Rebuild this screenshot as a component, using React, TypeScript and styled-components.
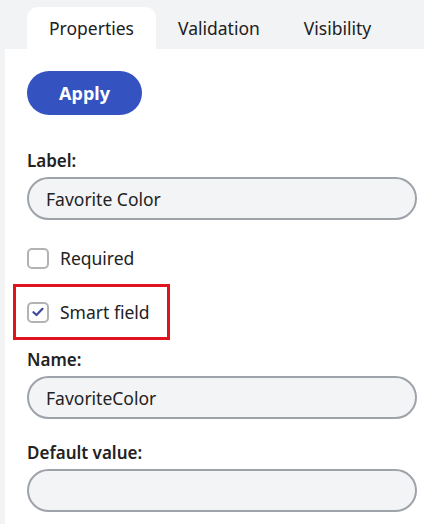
import React from 'react';
import styled, { createGlobalStyle } from 'styled-components';

const GlobalStyle = createGlobalStyle`
    html, body {
        margin: 0;
        background: #f2f3f5;
        font-family: "Noto Sans", "Open Sans", "Liberation Sans", sans-serif;
        color: #222;
    }
    * { box-sizing: border-box; }
`;

const Page = styled.div`
    min-height: 524px;
    display: flex;
    flex-direction: column;
`;

const TabBar = styled.div`
    display: flex;
    padding: 7px 0 0 27px;
`;

const Tab = styled.div<{ $active?: boolean }>`
    height: 42px;
    padding: 0 22px;
    display: flex;
    align-items: center;
    font-size: 17.5px;
    color: #202020;
    border-radius: 11px 11px 0 0;
    background: ${p => (p.$active ? '#fff' : 'transparent')};
`;

const Panel = styled.div`
    flex: 1;
    margin-left: 5px;
    background: #fff;
    padding: 22px 7px 0 22px;
    display: flex;
    flex-direction: column;
    align-items: flex-start;
`;

const ApplyButton = styled.button`
    width: 115px;
    height: 44px;
    border: none;
    border-radius: 22px;
    background: #3453c1;
    color: #fff;
    font-family: inherit;
    font-size: 18px;
    font-weight: 700;
    cursor: pointer;
`;

const Field = styled.div<{ $gap: number }>`
    align-self: stretch;
    display: flex;
    flex-direction: column;
    gap: 5px;
    margin-top: ${p => p.$gap}px;
`;

const Label = styled.label`
    font-size: 17px;
    font-weight: 600;
    line-height: 22px;
    color: #222;
`;

const Input = styled.input`
    height: 43px;
    width: 100%;
    border: 2px solid #9ea3aa;
    border-radius: 22px;
    background: #f3f4f6;
    padding: 0 17px;
    font-family: inherit;
    font-size: 17.5px;
    color: #222;
    outline: none;
`;

const CheckRow = styled.label<{ $gap: number; $highlight?: boolean }>`
    position: relative;
    display: flex;
    align-items: center;
    gap: 11px;
    height: 22px;
    margin-top: ${p => p.$gap}px;
    font-size: 17.5px;
    color: #222;

    ${p =>
        p.$highlight &&
        `
        &::after {
            content: '';
            position: absolute;
            left: -14px;
            right: -20px;
            top: -17px;
            bottom: -17px;
            border: 3px solid #e0141e;
        }
    `}
`;

const Box = styled.span`
    width: 22px;
    height: 21px;
    border: 2px solid #b3b3b3;
    border-radius: 5px;
    background: #fff;
    display: flex;
    align-items: center;
    justify-content: center;
`;

function Checkbox({ checked }: { checked?: boolean }) {
    return (
        <Box>
            {checked && (
                <svg width="12" height="10" viewBox="0 0 12 10">
                    <path d="M1.5 5.2 L4.5 8 L10.5 1.8" fill="none" stroke="#3c4a9e" strokeWidth="2.2" strokeLinecap="round" strokeLinejoin="round" />
                </svg>
            )}
        </Box>
    );
}

export default function App() {
    return (
        <Page>
            <GlobalStyle />
            <TabBar>
                <Tab $active>Properties</Tab>
                <Tab>Validation</Tab>
                <Tab>Visibility</Tab>
            </TabBar>
            <Panel>
                <ApplyButton>Apply</ApplyButton>
                <Field $gap={35}>
                    <Label>Label:</Label>
                    <Input defaultValue="Favorite Color" />
                </Field>
                <CheckRow $gap={27}>
                    <Checkbox />
                    Required
                </CheckRow>
                <CheckRow $gap={32} $highlight>
                    <Checkbox checked />
                    Smart field
                </CheckRow>
                <Field $gap={26}>
                    <Label>Name:</Label>
                    <Input defaultValue="FavoriteColor" />
                </Field>
                <Field $gap={23}>
                    <Label>Default value:</Label>
                    <Input defaultValue="" />
                </Field>
            </Panel>
        </Page>
    );
}
